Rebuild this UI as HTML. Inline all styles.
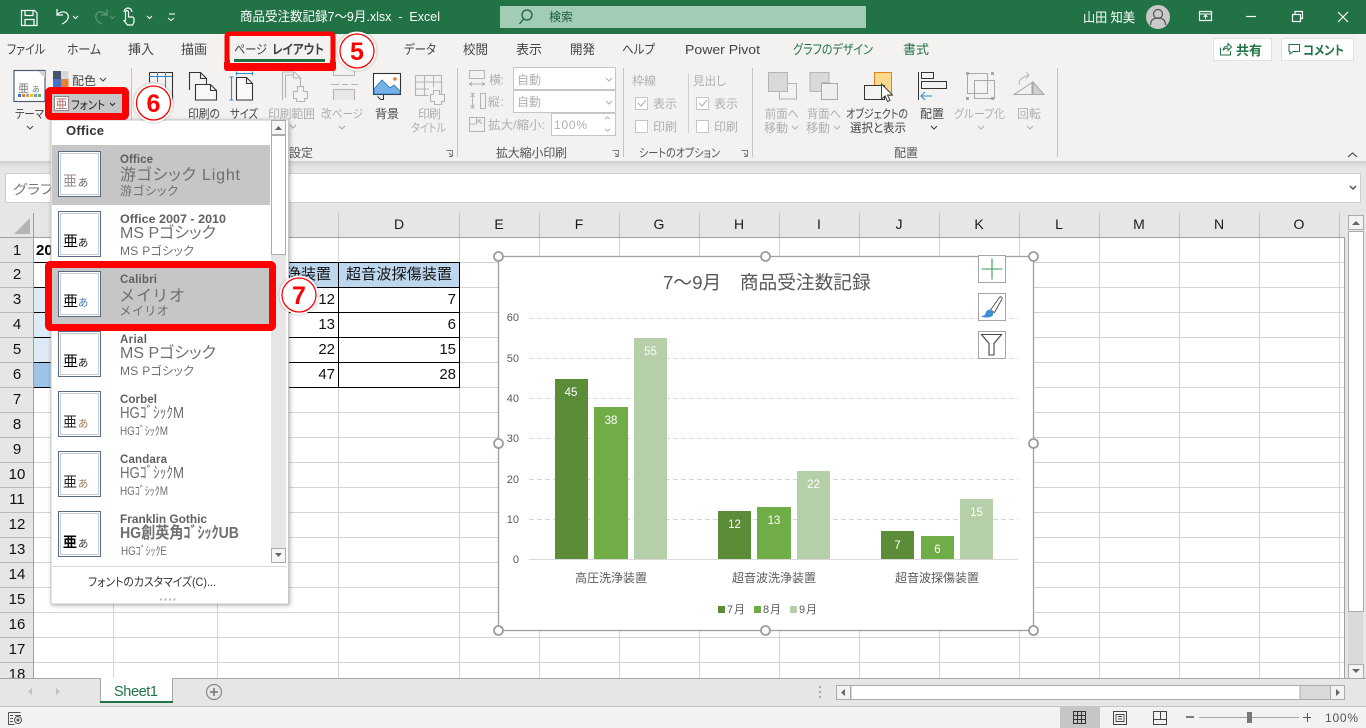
<!DOCTYPE html>
<html lang="ja"><head><meta charset="utf-8"><title>Excel</title>
<style>
html,body{margin:0;padding:0;width:1366px;height:728px;overflow:hidden;background:#e6e6e6}
svg{display:block}
text{font-family:"Liberation Sans","Noto Sans CJK JP",sans-serif;font-feature-settings:"palt";white-space:pre}
.tab{font-size:13px;fill:#444}
.rb{font-size:12px;fill:#444}
.dis{font-size:12px;fill:#b0b0b0}
.grp{font-size:12px;fill:#555}
.rn{font-size:15px;fill:#111;text-anchor:middle}
.cn{font-size:14px;fill:#1a1a1a;text-anchor:middle}
.cell{font-size:15px;fill:#111;text-anchor:end}
.ax{font-size:11px;fill:#595959;text-anchor:end}
.dl{font-size:11.500px;fill:#fff;text-anchor:middle}
.cat{font-size:12px;fill:#595959;text-anchor:middle}
.nm{font-size:11.500px;font-weight:bold;fill:#5f5f5f}
.l2{font-size:16px;fill:#6f6f6f}
.l3{font-size:12px;fill:#6f6f6f}
.num{font-size:25px;font-weight:bold;fill:#f00;text-anchor:middle}
</style></head><body>
<svg width="1366" height="728" viewBox="0 0 1366 728" xmlns="http://www.w3.org/2000/svg">
<defs>
<filter id="sh" x="-10%" y="-10%" width="120%" height="120%"><feDropShadow dx="1" dy="1" stdDeviation="2" flood-color="#000" flood-opacity=".3"/></filter>
<filter id="rs" x="-20%" y="-20%" width="140%" height="140%"><feDropShadow dx="0" dy="0" stdDeviation="1.200" flood-color="#000" flood-opacity=".35"/></filter>
<linearGradient id="rshade" x1="0" y1="0" x2="0" y2="1"><stop offset="0" stop-color="#cfcfcf"/><stop offset="1" stop-color="#e6e6e6"/></linearGradient>
<g id="thumb"><rect x="58.500" y="0.500" width="42" height="45" fill="#fff" stroke="#5b6b84"/><rect x="60.500" y="2.500" width="38" height="41" fill="#fff" stroke="#c6ccd6"/></g>
</defs>

<!-- base -->
<rect width="1366" height="728" fill="#e6e6e6"/>
<rect y="0" width="1366" height="34" fill="#217346"/>
<rect y="34" width="1366" height="127" fill="#f3f2f1"/>
<rect y="161" width="1366" height="6" fill="url(#rshade)"/>

<!-- title bar -->
<g fill="none" stroke="#fff" stroke-width="1.200">
<path d="M21.500 10.500h13l2.500 2.500v12.500h-15.500z"/><path d="M25 10.500v5h8v-5M25 25.500v-6h9v6"/>
<path d="M57 9v6h6M57.500 14.500c3-3.500 9-3.500 10.500 .5 1.200 3.500-1.500 7-6 9"/>
<path d="M73 16l2.500 2.500 2.500-2.500" stroke-width="1"/>
<path d="M147 16l2.500 2.500 2.500-2.500M169 14h6M168 18l3 2.500 3-2.500" stroke-width="1"/>
<path d="M124 12a4 4 0 0 1 8 0M125.500 21v-9a1.500 1.500 0 0 1 3 0v5h3.500a2 2 0 0 1 2 2v3l-1.500 3h-5l-4-5"/>
</g>
<g fill="none" stroke="#5b9a79" stroke-width="1.200"><path d="M107 9v6h-6M106.500 14.500c-3-3.500-9-3.500-10.500 .5-1.200 3.500 1.500 7 6 9"/><path d="M110 16l2.500 2.500 2.500-2.500" stroke-width="1"/></g>
<text x="240" y="21" font-size="13" fill="#fff" textLength="200" lengthAdjust="spacingAndGlyphs">商品受注数記録7〜9月.xlsx  -  Excel</text>
<rect x="500" y="6" width="366" height="22" fill="#a0cdb4"/>
<circle cx="527" cy="15" r="5" fill="none" stroke="#1d5c3b" stroke-width="1.200"/><path d="M523.500 19l-4 5" stroke="#1d5c3b" stroke-width="1.200"/>
<text x="549" y="21" font-size="12" fill="#1d5c3b" textLength="24">検索</text>
<text x="1083" y="22" font-size="13" fill="#fff" textLength="52" lengthAdjust="spacingAndGlyphs">山田 知美</text>
<circle cx="1158" cy="17" r="12" fill="#c9c9c9"/>
<circle cx="1158" cy="14" r="4.500" fill="none" stroke="#555" stroke-width="1.200"/><path d="M1150.500 25c0-5 3-7 7.500-7s7.500 2 7.500 7" fill="none" stroke="#555" stroke-width="1.200"/>
<g fill="none" stroke="#fff" stroke-width="1.200">
<rect x="1199.500" y="11.500" width="12" height="9"/><path d="M1199 14h13M1205.500 19v-4M1203.500 17l2-2 2 2" stroke-width="1"/>
<path d="M1246 16.500h10"/>
<rect x="1292.500" y="14.500" width="8" height="7"/><path d="M1295 14v-2.500h7.500v7h-2"/>
<path d="M1338 12l10 10M1348 12l-10 10"/>
</g>

<!-- tabs -->
<text class="tab" x="7" y="54" textLength="38" lengthAdjust="spacingAndGlyphs">ファイル</text>
<text class="tab" x="67" y="54" textLength="34" lengthAdjust="spacingAndGlyphs">ホーム</text>
<text class="tab" x="128" y="54" textLength="26" lengthAdjust="spacingAndGlyphs">挿入</text>
<text class="tab" x="181" y="54" textLength="26" lengthAdjust="spacingAndGlyphs">描画</text>
<text class="tab" x="404" y="54" textLength="32" lengthAdjust="spacingAndGlyphs">データ</text>
<text class="tab" x="463" y="54" textLength="25" lengthAdjust="spacingAndGlyphs">校閲</text>
<text class="tab" x="516" y="54" textLength="26" lengthAdjust="spacingAndGlyphs">表示</text>
<text class="tab" x="570" y="54" textLength="25" lengthAdjust="spacingAndGlyphs">開発</text>
<text class="tab" x="622" y="54" textLength="33" lengthAdjust="spacingAndGlyphs">ヘルプ</text>
<text class="tab" x="685" y="54" textLength="75" lengthAdjust="spacingAndGlyphs">Power Pivot</text>
<text x="793" y="54" font-size="13" fill="#217346" textLength="80" lengthAdjust="spacingAndGlyphs">グラフのデザイン</text>
<text x="903" y="54" font-size="13" fill="#217346" textLength="26">書式</text>
<rect x="1213.500" y="38.500" width="58" height="22" fill="#fff" stroke="#e2e1e0"/>
<path d="M1220.500 47.500v7.500h10v-4M1223 50.500c.5-3 2.500-4.500 5-4.500v-2.500l3.500 3.500-3.500 3.500v-2.500c-2 0-3.500.5-5 2.500z" fill="none" stroke="#217346" stroke-width="1"/>
<text x="1236" y="55" font-size="13" font-weight="bold" fill="#217346" textLength="26">共有</text>
<rect x="1281.500" y="38.500" width="72" height="22" fill="#fff" stroke="#e2e1e0"/>
<path d="M1289 44.500h10.500v7h-6.500l-3 2.500v-2.500h-1z" fill="none" stroke="#217346" stroke-width="1"/>
<text x="1303" y="55" font-size="13" font-weight="bold" fill="#217346" textLength="41" lengthAdjust="spacingAndGlyphs">コメント</text>

<!-- ribbon dividers -->
<path d="M131.500 68v89M457.500 68v89M623.500 68v89M752.500 68v89M1057.500 68v89" stroke="#c6c6c6"/>
<path d="M688.500 74v59" stroke="#d0d0d0"/>

<!-- theme group -->
<rect x="14" y="70.500" width="31" height="31" fill="#fff" stroke="#4d5d78" stroke-width="1.200"/>
<path d="M38 71h7v7z" fill="#cfd3da"/>
<text x="18" y="92" font-size="11" fill="#777">亜</text><text x="32" y="92" font-size="8" fill="#777">あ</text>
<rect x="18" y="94" width="3" height="3" fill="#4472c4"/><rect x="22" y="94" width="3" height="3" fill="#ed7d31"/><rect x="26" y="94" width="3" height="3" fill="#a5a5a5"/><rect x="30" y="94" width="3" height="3" fill="#ffc000"/><rect x="34" y="94" width="3" height="3" fill="#5b9bd5"/><rect x="38" y="94" width="3" height="3" fill="#70ad47"/>
<text class="rb" x="15" y="118" textLength="29" lengthAdjust="spacingAndGlyphs">テーマ</text>
<path d="M27 126l3 3 3-3" fill="none" stroke="#444"/>
<rect x="53" y="71" width="8" height="8" fill="#44546a"/><rect x="61" y="71" width="7.500" height="8" fill="#d8d8d8"/><rect x="53" y="79" width="8" height="8" fill="#4472c4"/><rect x="61" y="79" width="7.500" height="8" fill="#ed7d31"/>
<text class="rb" x="72" y="85" textLength="24">配色</text>
<path d="M100 78l3 3 3-3" fill="none" stroke="#444"/>

<!-- page setup icons -->
<g fill="none" stroke="#333" stroke-width="1.100">
<path d="M149.500 72.500h23v28M149.500 72.500v10"/><path d="M149 76.500h23M157.500 72v10M165.500 72v28" stroke="#2e8bd0"/>
<path d="M189.500 90v-17.500h11l6 6v6"/><path d="M200.500 72.500v6h6"/>
<path d="M195.500 84.500h15l6 6v9.500h-21z" fill="#f7f7f7"/><path d="M210.500 84.500v6h6"/>
<path d="M236.500 77.500h10l6 6v16.500h-16z" fill="#fafafa"/><path d="M246.500 77.500v6h6"/>
<path d="M231.500 77v23M236 73.500h17M229.500 77h4M229.500 100h4M236.500 71.500v4M252.500 71.500v4" stroke="#2e8bd0"/>
</g>
<g fill="none" stroke="#b4b4b4" stroke-width="1.100">
<path d="M282.500 100v-28h12l6 6v8"/><path d="M285.500 98v-23h8"/><path d="M293.500 72v6h7"/>
<path d="M297.500 86.500h6v5h4v7h-3v3h-8v-3h-3v-7h4z" fill="#f3f2f1"/>
<path d="M333.500 71v4.500h21V71"/><path d="M331 84.500h8m3 0h6m3 0h7"/>
<path d="M333.500 100v-10.500h21V100" fill="#e8e8e8"/>
<path d="M415.500 75.500h26v20h-10M415.500 75.500v20h13M424.500 75v20M433.500 75v12M415 82h26M415 89h14"/>
<path d="M433.500 90.500h6v4h5v7h-3v3h-7v-3h-4v-7h3z" fill="#f3f2f1"/>
<path d="M290 125l3 3 3-3M339 126l3 3 3-3" stroke="#aaa"/>
</g>
<rect x="373.500" y="73.500" width="27" height="21" fill="#fff" stroke="#333" stroke-width="1.100"/>
<path d="M374 89l8-9 8 8 4-3 6 6v3h-26z" fill="#74b3e8" stroke="#2a6fb0" stroke-width=".8"/>
<circle cx="395" cy="79" r="1.800" fill="#ed7d31"/>
<path d="M383.500 94.500v5h-3l-3-3" fill="none" stroke="#333"/>
<text class="rb" x="188" y="118" textLength="32" lengthAdjust="spacingAndGlyphs">印刷の</text>
<text class="rb" x="230" y="118" textLength="28" lengthAdjust="spacingAndGlyphs">サイズ</text>
<text class="dis" x="268" y="118" textLength="47">印刷範囲</text>
<text class="dis" x="321" y="118" textLength="42" lengthAdjust="spacingAndGlyphs">改ページ</text>
<text class="rb" x="375" y="118" textLength="24">背景</text>
<text class="dis" x="418" y="118" textLength="23">印刷</text>
<text class="dis" x="411" y="132" textLength="35" lengthAdjust="spacingAndGlyphs">タイトル</text>
<text class="grp" x="289" y="157" textLength="24">設定</text>
<path d="M446.500 150.500h6v6M449 153l3.500 3.500M449 156.500h3" fill="none" stroke="#777" stroke-width=".9"/>

<!-- scale group -->
<g fill="none" stroke="#b4b4b4" stroke-width="1">
<path d="M469.500 70.500h15v8h-15zM469.500 83v2M484.500 83v2M470 84h14M472 82l-2 2 2 2M482 82l2 2-2 2"/>
<path d="M480.500 93.500h5v15h-5zM472.500 94v13M470.500 93.500h4M470.500 108h4M470.500 97l2-2 2 2M470.500 105l2 2 2-2"/>
<path d="M469.500 117.500h15v14h-15zM469.500 124h7v-6.500M478 120l4 4M478 123v-3h3"/>
</g>
<text class="dis" x="489" y="84" textLength="15">横:</text>
<text class="dis" x="488" y="106" textLength="16">縦:</text>
<text class="dis" x="488" y="129" textLength="57" lengthAdjust="spacingAndGlyphs">拡大/縮小:</text>
<rect x="513.500" y="67.500" width="102" height="22" fill="#fff" stroke="#c6c6c6"/>
<rect x="513.500" y="90.500" width="102" height="22" fill="#fff" stroke="#c6c6c6"/>
<rect x="551.500" y="113.500" width="64" height="22" fill="#fff" stroke="#c6c6c6"/>
<text class="dis" x="517" y="84" textLength="24">自動</text>
<text class="dis" x="517" y="106" textLength="24">自動</text>
<text class="dis" x="554" y="129" textLength="33">100%</text>
<path d="M606 78l3 3 3-3M606 101l3 3 3-3M605 119l2.500-2 2.500 2M605 129l2.500 2 2.500-2" fill="none" stroke="#b0b0b0"/>
<text class="grp" x="496" y="157" textLength="71">拡大縮小印刷</text>
<path d="M612.500 150.500h6v6M615 153l3.500 3.500M615 156.500h3" fill="none" stroke="#777" stroke-width=".9"/>

<!-- sheet options -->
<text class="dis" x="632" y="85" textLength="24">枠線</text>
<text class="dis" x="693" y="85" textLength="33" lengthAdjust="spacingAndGlyphs">見出し</text>
<g fill="#fff" stroke="#c6c6c6"><rect x="635.500" y="97.500" width="12" height="12"/><rect x="635.500" y="120.500" width="12" height="12"/><rect x="696.500" y="97.500" width="12" height="12"/><rect x="696.500" y="120.500" width="12" height="12"/></g>
<path d="M638 103l3 3 5-6M699 103l3 3 5-6" fill="none" stroke="#b4b4b4" stroke-width="1.100"/>
<text class="dis" x="653" y="108" textLength="24">表示</text>
<text class="dis" x="653" y="131" textLength="24">印刷</text>
<text class="dis" x="714" y="108" textLength="24">表示</text>
<text class="dis" x="714" y="131" textLength="24">印刷</text>
<text class="grp" x="639" y="157" textLength="81" lengthAdjust="spacingAndGlyphs">シートのオプション</text>
<path d="M741.500 150.500h6v6M744 153l3.500 3.500M744 156.500h3" fill="none" stroke="#777" stroke-width=".9"/>

<!-- arrange -->
<rect x="768.500" y="72.500" width="19" height="19" fill="#d9d9d9" stroke="#b4b4b4"/>
<path d="M788 83.500h8.500v15.500H779.500v-7" fill="none" stroke="#b4b4b4"/>
<path d="M810 72.500h19v10h-7v9h-12z" fill="#d9d9d9" stroke="#b4b4b4"/>
<rect x="821.500" y="83.500" width="16" height="16" fill="#eee" stroke="#a8a8a8"/>
<rect x="874.500" y="72.500" width="17" height="23" fill="#fad88c" stroke="#e0851d"/>
<rect x="864.500" y="85.500" width="20" height="14" fill="#f3f3f3" stroke="#333"/>
<path d="M881.500 84v15l3.500-3 2.500 5.500 2.500-1-2.500-5.500h5z" fill="#fff" stroke="#444" stroke-width="1"/>
<text class="dis" x="765" y="118" textLength="34" lengthAdjust="spacingAndGlyphs">前面へ</text>
<text class="dis" x="764" y="132" textLength="24">移動</text>
<path d="M792 126l3 3 3-3" fill="none" stroke="#b0b0b0"/>
<text class="dis" x="807" y="118" textLength="34" lengthAdjust="spacingAndGlyphs">背面へ</text>
<text class="dis" x="806" y="132" textLength="24">移動</text>
<path d="M834 126l3 3 3-3" fill="none" stroke="#b0b0b0"/>
<text class="rb" x="846" y="118" textLength="62" lengthAdjust="spacingAndGlyphs">オブジェクトの</text>
<text class="rb" x="850" y="132" textLength="56" lengthAdjust="spacingAndGlyphs">選択と表示</text>
<text class="grp" x="894" y="157" textLength="24">配置</text>
<path d="M918.500 72v28" stroke="#333"/>
<rect x="921.500" y="72.500" width="12" height="6" fill="none" stroke="#333"/>
<rect x="921.500" y="81.500" width="25" height="7" fill="none" stroke="#333"/>
<path d="M932 96h-11M925 92l-4 4 4 4" fill="none" stroke="#2e8bd0" stroke-width="1.100"/>
<text class="rb" x="920" y="118" textLength="24">配置</text>
<path d="M931 126l3 3 3-3" fill="none" stroke="#333"/>
<g fill="none" stroke="#a8a8a8" stroke-width="1"><rect x="967.500" y="73.500" width="20" height="20"/><rect x="974.500" y="80.500" width="20" height="18"/></g>
<g fill="#a8a8a8"><rect x="966" y="72" width="3" height="3"/><rect x="991" y="72" width="3" height="3"/><rect x="966" y="97" width="3" height="3"/><rect x="991" y="97" width="3" height="3"/></g>
<path d="M1014 94.500l18-12v12z" fill="none" stroke="#a8a8a8"/><path d="M1033 82l11 12.500h-11z" fill="#d0d0d0" stroke="#a8a8a8"/>
<path d="M1029 75l-5 2c-4 2-6 5-4 8M1026 72l3 3-3 4" fill="none" stroke="#b8b8b8"/>
<text class="dis" x="954" y="118" textLength="51" lengthAdjust="spacingAndGlyphs">グループ化</text>
<text class="dis" x="1017" y="118" textLength="24">回転</text>
<path d="M978 126l3 3 3-3M1027 126l3 3 3-3" fill="none" stroke="#b0b0b0"/>
<path d="M1348 157l4.500-4 4.500 4" fill="none" stroke="#444" stroke-width="1.100"/>

<!-- formula bar -->
<rect x="5.500" y="173.500" width="1355" height="29" fill="#fff" stroke="#cfcfcf"/>
<text x="13" y="194" font-size="13" fill="#777" textLength="40" lengthAdjust="spacingAndGlyphs">グラフ</text>
<path d="M1350 186l3 3 3-3" fill="none" stroke="#666" stroke-width="1.600"/>

<!-- sheet -->
<rect x="34" y="238" width="1310" height="440" fill="#fff"/>
<g stroke="#d4d4d4">
<path d="M34 262.500H1344M34 287.500H1344M34 312.500H1344M34 337.500H1344M34 362.500H1344M34 387.500H1344M34 412.500H1344M34 437.500H1344M34 462.500H1344M34 487.500H1344M34 512.500H1344M34 537.500H1344M34 562.500H1344M34 587.500H1344M34 612.500H1344M34 637.500H1344M34 662.500H1344"/>
<path d="M113.500 238V678M217.500 238V678M338.500 238V678M459.500 238V678M539.500 238V678M619.500 238V678M699.500 238V678M779.500 238V678M859.500 238V678M939.500 238V678M1019.500 238V678M1099.500 238V678M1179.500 238V678M1259.500 238V678M1339.500 238V678"/>
</g>
<path d="M113.500 213v24M217.500 213v24M338.500 213v24M459.500 213v24M539.500 213v24M619.500 213v24M699.500 213v24M779.500 213v24M859.500 213v24M939.500 213v24M1019.500 213v24M1099.500 213v24M1179.500 213v24M1259.500 213v24M1339.500 213v24" stroke="#c2c2c2"/>
<path d="M0 237.500H1344.500V678M33.500 213V678" fill="none" stroke="#9f9f9f"/>
<path d="M0 262.500h33M0 287.500h33M0 312.500h33M0 337.500h33M0 362.500h33M0 387.500h33M0 412.500h33M0 437.500h33M0 462.500h33M0 487.500h33M0 512.500h33M0 537.500h33M0 562.500h33M0 587.500h33M0 612.500h33M0 637.500h33M0 662.500h33" stroke="#b8b8b8"/>
<path d="M30 218v16h-16z" fill="#b4b4b4"/>
<text class="cn" x="399" y="229">D</text><text class="cn" x="499" y="229">E</text><text class="cn" x="579" y="229">F</text><text class="cn" x="659" y="229">G</text><text class="cn" x="739" y="229">H</text><text class="cn" x="819" y="229">I</text><text class="cn" x="899" y="229">J</text><text class="cn" x="979" y="229">K</text><text class="cn" x="1059" y="229">L</text><text class="cn" x="1139" y="229">M</text><text class="cn" x="1219" y="229">N</text><text class="cn" x="1299" y="229">O</text>
<text class="rn" x="17" y="255">1</text><text class="rn" x="17" y="279">2</text><text class="rn" x="17" y="304">3</text><text class="rn" x="17" y="329">4</text><text class="rn" x="17" y="354">5</text><text class="rn" x="17" y="379">6</text><text class="rn" x="17" y="404">7</text><text class="rn" x="17" y="429">8</text><text class="rn" x="17" y="454">9</text><text class="rn" x="17" y="479">10</text><text class="rn" x="17" y="504">11</text><text class="rn" x="17" y="529">12</text><text class="rn" x="17" y="554">13</text><text class="rn" x="17" y="579">14</text><text class="rn" x="17" y="604">15</text><text class="rn" x="17" y="629">16</text><text class="rn" x="17" y="654">17</text><text class="rn" x="17" y="679">18</text>
<rect x="0" y="678" width="1366" height="28" fill="#e6e6e6"/>

<!-- table -->
<text x="36" y="255" font-size="15" font-weight="bold" fill="#000">20</text>
<rect x="34" y="288" width="60" height="24" fill="#ddebf7"/><rect x="34" y="313" width="60" height="24" fill="#ddebf7"/><rect x="34" y="338" width="60" height="24" fill="#ddebf7"/><rect x="34" y="363" width="60" height="24" fill="#9dc3e6"/>
<rect x="217" y="262" width="243" height="25" fill="#bdd7ee"/>
<path d="M34 262.500H459.500M34 287.500H459.500M34 312.500H459.500M34 337.500H459.500M34 362.500H459.500M34 387.500H459.500M338.500 262V388M459.500 262V388" fill="none" stroke="#000"/>
<text x="271" y="279" font-size="15" fill="#111" textLength="60">洗浄装置</text>
<text x="346" y="279" font-size="15" fill="#111" textLength="106">超音波探傷装置</text>
<text class="cell" x="335" y="304">12</text><text class="cell" x="335" y="329">13</text><text class="cell" x="335" y="354">22</text><text class="cell" x="335" y="379">47</text>
<text class="cell" x="456" y="304">7</text><text class="cell" x="456" y="329">6</text><text class="cell" x="456" y="354">15</text><text class="cell" x="456" y="379">28</text>

<!-- chart -->
<rect x="498.500" y="256.500" width="535" height="374" fill="#fff" stroke="#a0a0a0" stroke-width="1.300"/>
<text x="663" y="289" font-size="18.700" fill="#595959" style="font-feature-settings:normal">7〜9月　商品受注数記録</text>
<path d="M529 318.500H1018M529 358.500H1018M529 398.500H1018M529 438.500H1018M529 479.500H1018M529 519.500H1018" stroke="#d9d9d9" stroke-dasharray="5 3"/>
<path d="M529 559.500H1018" stroke="#d9d9d9"/>
<text class="ax" x="519" y="321">60</text><text class="ax" x="519" y="362">50</text><text class="ax" x="519" y="402">40</text><text class="ax" x="519" y="442">30</text><text class="ax" x="519" y="483">20</text><text class="ax" x="519" y="523">10</text><text class="ax" x="519" y="563">0</text>
<g fill="#5b8c38"><rect x="555" y="379" width="33" height="180"/><rect x="718" y="511" width="33" height="48"/><rect x="881" y="531" width="33" height="28"/></g>
<g fill="#70ad47"><rect x="594" y="407" width="34" height="152"/><rect x="757" y="507" width="34" height="52"/><rect x="921" y="536" width="33" height="23"/></g>
<g fill="#b5cfa8"><rect x="634" y="338" width="33" height="221"/><rect x="797" y="471" width="33" height="88"/><rect x="960" y="499" width="33" height="60"/></g>
<text class="dl" x="571" y="396">45</text><text class="dl" x="611" y="424">38</text><text class="dl" x="650.500" y="355">55</text>
<text class="dl" x="734.500" y="528">12</text><text class="dl" x="774" y="524">13</text><text class="dl" x="813.500" y="488">22</text>
<text class="dl" x="897.500" y="549">7</text><text class="dl" x="937.500" y="553">6</text><text class="dl" x="976.500" y="516">15</text>
<text class="cat" x="611" y="582" textLength="72">高圧洗浄装置</text>
<text class="cat" x="774" y="582" textLength="84">超音波洗浄装置</text>
<text class="cat" x="937" y="582" textLength="84">超音波探傷装置</text>
<rect x="718" y="606" width="7" height="7" fill="#5b8c38"/><text x="727" y="613" font-size="11" fill="#595959" textLength="18">7月</text>
<rect x="754" y="606" width="7" height="7" fill="#70ad47"/><text x="763" y="613" font-size="11" fill="#595959" textLength="18">8月</text>
<rect x="790" y="606" width="7" height="7" fill="#b5cfa8"/><text x="799" y="613" font-size="11" fill="#595959" textLength="18">9月</text>
<g fill="#fff" stroke="#9d9d9d" stroke-width="1.800">
<circle cx="498.500" cy="256.500" r="4.500"/><circle cx="765.500" cy="256.500" r="4.500"/><circle cx="1033.500" cy="256.500" r="4.500"/><circle cx="498.500" cy="443.500" r="4.500"/><circle cx="1033.500" cy="443.500" r="4.500"/><circle cx="498.500" cy="630.500" r="4.500"/><circle cx="765.500" cy="630.500" r="4.500"/><circle cx="1033.500" cy="630.500" r="4.500"/>
</g>
<g fill="#fff" stroke="#a6a6a6"><rect x="978.500" y="255.500" width="27" height="27"/><rect x="978.500" y="293.500" width="27" height="27"/><rect x="978.500" y="331.500" width="27" height="27"/></g>
<path d="M992 258.500v21M981.500 269h21" stroke="#3a9a55" stroke-width="1.100"/>
<path d="M990.500 310l9-12.500c1-1.500 3.500 0 2.500 1.500l-7.500 13.500z" fill="#fff" stroke="#555" stroke-width="1"/>
<path d="M981 316c3 0 4-1 5-4 1-2 3-3 5-2s3 3 2 5c-1 2-4 2.500-6 2.500-2 0-5 0-6-1.500z" fill="#3f8fd8"/>
<path d="M981.500 334.500h20l-7.500 9v11.500h-5v-11.500z" fill="#fff" stroke="#444" stroke-width="1.100"/>

<!-- vertical scrollbar -->
<rect x="1345" y="205" width="21" height="473" fill="#e6e6e6"/>
<rect x="1348" y="231" width="15" height="433" fill="#d9d9d9"/>
<rect x="1348.500" y="231.500" width="15" height="380" fill="#fff" stroke="#ababab"/>
<rect x="1348.500" y="215.500" width="15" height="14" fill="#f3f3f3" stroke="#ababab"/>
<path d="M1352 225l4-4 4 4z" fill="#666"/>
<rect x="1348.500" y="664.500" width="15" height="14" fill="#f3f3f3" stroke="#ababab"/>
<path d="M1352 669l4 4 4-4z" fill="#666"/>

<!-- tab bar -->
<path d="M0 678.500H1366" stroke="#a6a6a6"/>
<path d="M0 706.500H1366" stroke="#c6c6c6"/>
<rect x="100" y="678" width="72" height="24" fill="#fff"/>
<path d="M100.500 678v24M172.500 678v24" stroke="#a6a6a6"/>
<rect x="100" y="701" width="73" height="2" fill="#217346"/>
<text x="114" y="696" font-size="14.500" fill="#217346" textLength="44">Sheet1</text>
<path d="M32 688l-4 3.500 4 3.500zM56 688l4 3.500-4 3.500z" fill="#c0c0c0"/>
<circle cx="214" cy="692" r="7.500" fill="none" stroke="#888" stroke-width="1.200"/><path d="M214 688v8M210 692h8" stroke="#777" stroke-width="1.500"/>
<path d="M820 692v.1M820 697v.1M820 687v.1" stroke="#a8a8a8" stroke-width="2" stroke-linecap="square"/>
<rect x="836.500" y="685.500" width="508" height="14" fill="#d9d9d9" stroke="#ababab"/>
<rect x="851" y="685.500" width="449" height="14" fill="#fff" stroke="#ababab"/>
<rect x="836.500" y="685.500" width="14" height="14" fill="#f3f3f3" stroke="#ababab"/><path d="M845 689l-4 3.500 4 3.500z" fill="#666"/>
<rect x="1330.500" y="685.500" width="14" height="14" fill="#f3f3f3" stroke="#ababab"/><path d="M1336 689l4 3.500-4 3.500z" fill="#666"/>

<!-- status bar -->
<rect x="0" y="707" width="1366" height="21" fill="#f3f2f1"/>
<path d="M8.500 712.500h12M8.500 712.500v12h6M10 715.500h3M10 718.500h3M10 721.500h3M15 715.500h6" fill="none" stroke="#555"/>
<circle cx="18" cy="720" r="3.500" fill="none" stroke="#555"/><circle cx="18" cy="720" r="1.500" fill="#555"/>
<rect x="1060" y="707" width="40" height="21" fill="#c6c6c6"/>
<path d="M1073.500 711.500h12v12h-12zM1077.500 711v13M1081.500 711v13M1073 715.500h13M1073 719.500h13" fill="none" stroke="#333"/>
<rect x="1113.500" y="711.500" width="13" height="13" fill="none" stroke="#444"/><path d="M1116 714.500h8v7h-8zM1118 716.500h4M1118 719h4" fill="none" stroke="#444" stroke-width=".9"/>
<path d="M1153.500 711.500h13v13h-13z" fill="none" stroke="#444"/><path d="M1154 719.500h6.500v-8M1160.500 712v7.500h6" fill="none" stroke="#444"/>
<path d="M1186 717h8" stroke="#555" stroke-width="1.500"/>
<path d="M1199 717.500h100" stroke="#a6a6a6"/>
<rect x="1247" y="712" width="5" height="11" fill="#777"/>
<path d="M1303 717.500h8M1307.500 713v9" stroke="#555"/>
<text x="1325" y="722" font-size="12" fill="#555" textLength="33">100%</text>

<!-- dropdown -->
<rect x="51" y="120" width="237.500" height="484" fill="#fff" stroke="#c6c6c6" filter="url(#sh)"/>
<text x="66" y="135" font-size="13" font-weight="bold" fill="#333" textLength="38">Office</text>
<rect x="52" y="145" width="218" height="60" fill="#c6c6c6"/>
<rect x="52" y="265" width="218" height="60" fill="#c6c6c6"/>
<rect x="271" y="121" width="15" height="442" fill="#e6e6e6"/>
<rect x="271.500" y="135.500" width="14" height="119" fill="#fff" stroke="#ababab"/>
<rect x="271.500" y="120.500" width="14" height="14" fill="#f6f6f6" stroke="#ababab"/><path d="M275 130l3.500-4 3.500 4z" fill="#666"/>
<rect x="271.500" y="548.500" width="14" height="14" fill="#f6f6f6" stroke="#ababab"/><path d="M275 553l3.500 4 3.500-4z" fill="#666"/>
<path d="M52 566.500H287" stroke="#d9d9d9"/>
<use href="#thumb" y="151"/><use href="#thumb" y="211"/><use href="#thumb" y="271"/><use href="#thumb" y="331"/><use href="#thumb" y="391"/><use href="#thumb" y="451"/><use href="#thumb" y="511"/>
<text x="63" y="186" font-size="14" fill="#9b8b8b">亜</text><text x="78" y="186" font-size="10.500" fill="#666">あ</text>
<text x="63" y="246" font-size="15" fill="#000">亜</text><text x="78" y="246" font-size="10.500" fill="#222">あ</text>
<text x="63" y="306" font-size="15" fill="#000">亜</text><text x="78" y="306" font-size="10.500" fill="#4a7fb5">あ</text>
<text x="63" y="366" font-size="15" fill="#000">亜</text><text x="78" y="366" font-size="10.500" fill="#222">あ</text>
<text x="63" y="427" font-size="14" fill="#222">亜</text><text x="78" y="427" font-size="10.500" fill="#a08060">あ</text>
<text x="63" y="487" font-size="14" fill="#222">亜</text><text x="78" y="487" font-size="10.500" fill="#a08060">あ</text>
<text x="63" y="547" font-size="14" font-weight="bold" fill="#000">亜</text><text x="78" y="547" font-size="10.500" fill="#444">あ</text>

<text class="nm" x="120" y="163" textLength="33">Office</text>
<text class="l2" x="120" y="180" textLength="120" fill="#808080" lengthAdjust="spacing">游ゴシック Light</text>
<text class="l3" x="120" y="195" textLength="58">游ゴシック</text>
<text class="nm" x="120" y="223" textLength="106" lengthAdjust="spacingAndGlyphs">Office 2007 - 2010</text>
<text class="l2" x="120" y="238" textLength="96">MS Pゴシック</text>
<text class="l3" x="120" y="255" textLength="74">MS Pゴシック</text>
<text class="nm" x="120" y="283" textLength="37">Calibri</text>
<text class="l2" x="120" y="301" textLength="64">メイリオ</text>
<text class="l3" x="120" y="315" textLength="48">メイリオ</text>
<text class="nm" x="120" y="343" textLength="27">Arial</text>
<text class="l2" x="120" y="358" textLength="96">MS Pゴシック</text>
<text class="l3" x="120" y="375" textLength="74">MS Pゴシック</text>
<text class="nm" x="120" y="403" textLength="37">Corbel</text>
<text class="l2" x="120" y="418" textLength="64" lengthAdjust="spacingAndGlyphs">HGｺﾞｼｯｸM</text>
<text class="l3" x="120" y="435" textLength="48" lengthAdjust="spacingAndGlyphs">HGｺﾞｼｯｸM</text>
<text class="nm" x="120" y="463" textLength="47">Candara</text>
<text class="l2" x="120" y="478" textLength="64" lengthAdjust="spacingAndGlyphs">HGｺﾞｼｯｸM</text>
<text class="l3" x="120" y="495" textLength="48" lengthAdjust="spacingAndGlyphs">HGｺﾞｼｯｸM</text>
<text class="nm" x="120" y="523" textLength="87" lengthAdjust="spacingAndGlyphs">Franklin Gothic</text>
<text class="l2" x="120" y="538" font-weight="bold" fill="#555" textLength="119" lengthAdjust="spacingAndGlyphs">HG創英角ｺﾞｼｯｸUB</text>
<text class="l3" x="121" y="555" textLength="46" lengthAdjust="spacingAndGlyphs">HGｺﾞｼｯｸE</text>
<text x="88" y="586" font-size="12" fill="#333" textLength="128" lengthAdjust="spacingAndGlyphs">フォントのカスタマイズ(C)...</text>
<path d="M160 599.500h17" stroke="#b8b8b8" stroke-dasharray="2 2.500" stroke-width="2"/>

<!-- highlighted: tab -->
<rect x="227" y="34" width="106" height="33" rx="2" fill="#f3f2f1" stroke="#f00" stroke-width="5"/>
<rect x="224" y="60" width="112" height="11" rx="3" fill="#f00"/>
<rect x="230" y="36" width="100" height="27" fill="#f3f2f1"/>
<text x="234" y="54" font-size="13" fill="#444" textLength="33" lengthAdjust="spacingAndGlyphs">ページ</text>
<text x="272" y="54" font-size="13" font-weight="bold" fill="#444" textLength="52" lengthAdjust="spacingAndGlyphs">レイアウト</text>
<rect x="234" y="59" width="91" height="3" fill="#217346"/>

<!-- highlighted: font button -->
<rect x="48.500" y="90.500" width="77" height="26" rx="2" fill="#c6c6c6" stroke="#f00" stroke-width="7"/>
<rect x="54.500" y="96.500" width="14" height="14" fill="#fff" stroke="#8a8a8a"/>
<text x="55.500" y="108" font-size="12" fill="#b06a6a">亜</text>
<text x="71" y="109" font-size="12" fill="#222" textLength="34" lengthAdjust="spacingAndGlyphs">フォント</text>
<path d="M110 103l2.500 2.500 2.500-2.500" fill="none" stroke="#222"/>

<!-- highlighted: Calibri -->
<rect x="48.500" y="264.500" width="224" height="63" rx="2" fill="none" stroke="#f00" stroke-width="7"/>

<!-- numbered circles -->
<g filter="url(#rs)"><circle cx="357" cy="51" r="19.500" fill="#fff"/></g>
<circle cx="357" cy="51" r="17" fill="#fff" stroke="#f00" stroke-width="1.300"/>
<text class="num" x="357" y="60">5</text>
<g filter="url(#rs)"><circle cx="153.500" cy="103" r="19.500" fill="#fff"/></g>
<circle cx="153.500" cy="103" r="17" fill="#fff" stroke="#f00" stroke-width="1.300"/>
<text class="num" x="153.500" y="112">6</text>
<g filter="url(#rs)"><circle cx="299" cy="295" r="19.500" fill="#fff"/></g>
<circle cx="299" cy="295" r="17" fill="#fff" stroke="#f00" stroke-width="1.300"/>
<text class="num" x="299" y="304">7</text>
</svg>
</body></html>
